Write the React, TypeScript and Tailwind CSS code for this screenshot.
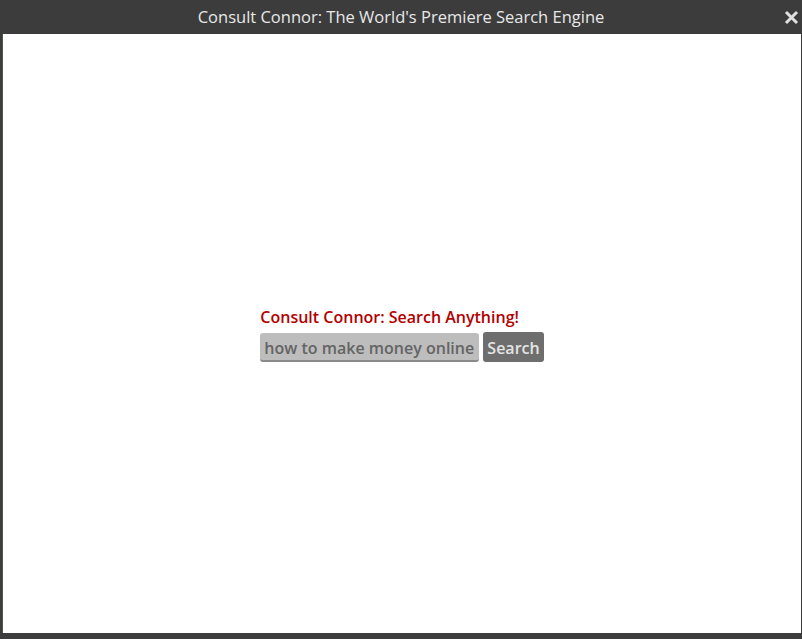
import React, { useState } from "react";

export default function App() {
  const [query, setQuery] = useState("how to make money online");

  return (
    <div
      className="h-[639px] w-[802px] flex flex-col bg-[#3c3c3c] overflow-hidden"
      style={{ fontFamily: '"Open Sans", "Noto Sans", sans-serif' }}
    >
      {/* title bar */}
      <div className="relative h-[34px] shrink-0 flex items-center justify-center text-[16.5px] font-medium text-[#e8e8e8]">
        Consult Connor: The World's Premiere Search Engine
        <button
          className="absolute right-[1px] top-[7px] w-[20px] h-[20px] grid place-items-center text-[#e0e0e0]"
          aria-label="Close"
        >
          <svg width="15" height="15" viewBox="0 0 15 15">
            <path d="M2 2 L13 13 M13 2 L2 13" stroke="currentColor" strokeWidth="3" strokeLinecap="butt" />
          </svg>
        </button>
      </div>

      {/* body */}
      <div className="flex-1 flex ml-[2px] mr-[1px] bg-white border-l border-[#4a5a48]">
        <div className="flex-1 flex items-center justify-center pt-[2px]">
          <div className="flex flex-col">
            <div className="text-[16px] font-semibold text-[#b30000] leading-[20px] mb-[5px]">
              Consult Connor: Search Anything!
            </div>
            <div className="flex items-center gap-[4px]">
              <input
                value={query}
                onChange={e => setQuery(e.target.value)}
                className="w-[219px] h-[29px] rounded-[3px] bg-[#bdbdbd] border-b-2 border-[#8a8a8a] px-[4px] pt-[3px] text-[16px] font-semibold text-[#646464] outline-none"
              />
              <button className="h-[30px] px-[4px] pt-[2px] rounded-[3px] bg-[#6e6e6e] text-[16px] font-semibold text-[#e4e4e4]">
                Search
              </button>
            </div>
          </div>
        </div>
      </div>

      {/* bottom edge */}
      <div className="h-[6px] shrink-0 bg-[#3c3c3c]" />
    </div>
  );
}
